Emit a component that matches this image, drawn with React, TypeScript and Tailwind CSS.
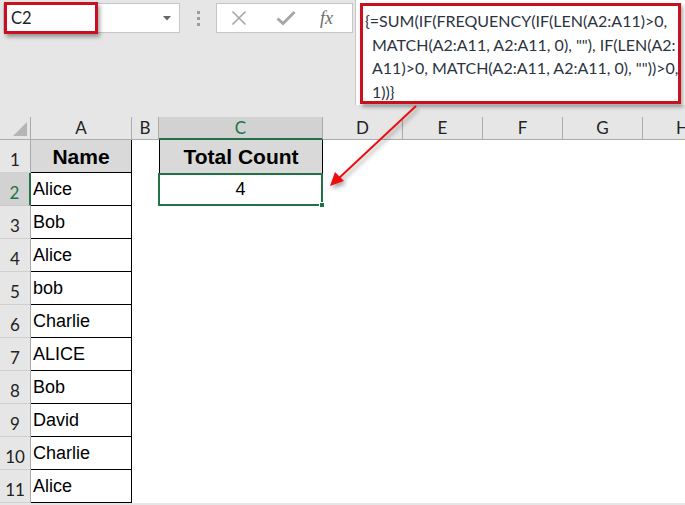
import React from "react";

const names = ["Alice", "Bob", "Alice", "bob", "Charlie", "ALICE", "Bob", "David", "Charlie", "Alice"];
const cols = ["A", "B", "C", "D", "E", "F", "G", "H"];

export default function App() {
  const formulaLines = [
    "{=SUM(IF(FREQUENCY(IF(LEN(A2:A11)>0,",
    "MATCH(A2:A11, A2:A11, 0), \"\"), IF(LEN(A2:",
    "A11)>0, MATCH(A2:A11, A2:A11, 0), \"\"))>0,",
    "1))}",
  ];
  return (
    <div className="relative w-[685px] h-[505px] overflow-hidden bg-[#e6e6e6] font-['Liberation_Sans',Arial,sans-serif]">
      {/* Toolbar */}
      <div className="flex h-[117px] items-start">
        {/* Name box */}
        <div className="relative ml-[3px] mt-[3px] flex h-[30px] w-[177px] items-center justify-between border border-[#c6c6c6] bg-white pl-[7px] pr-[8px]">
          <span className="font-['Lato',sans-serif] text-[16.5px] text-[#222]">C2</span>
          <svg width="8" height="5" viewBox="0 0 8 5"><path d="M0 0 H8 L4 4.5 Z" fill="#666" /></svg>
          <div className="absolute left-0 top-[-2px] h-[32px] w-[94px] border-[3px] border-[#c8101e] shadow-[2px_3px_4px_rgba(0,0,0,0.35)]" />
        </div>
        {/* dots */}
        <div className="ml-[17px] mt-[11px] flex flex-col gap-[3px]">
          <div className="h-[3px] w-[3px] bg-[#9c9c9c]" />
          <div className="h-[3px] w-[3px] bg-[#9c9c9c]" />
          <div className="h-[3px] w-[3px] bg-[#9c9c9c]" />
        </div>
        {/* fx box */}
        <div className="ml-[16px] mt-[3px] flex h-[30px] w-[137px] items-center border border-[#c6c6c6] bg-white">
          <svg className="ml-[14px]" width="16" height="16" viewBox="0 0 16 16">
            <path d="M1.5 1.5 L14.5 14.5 M14.5 1.5 L1.5 14.5" stroke="#a6a6a6" strokeWidth="1.6" fill="none" />
          </svg>
          <svg className="ml-[29px]" width="20" height="16" viewBox="0 0 20 16">
            <path d="M1.5 8.5 L7 13.5 L18.5 2" stroke="#a6a6a6" strokeWidth="3" fill="none" />
          </svg>
          <span className="ml-[24px] font-['Liberation_Serif',serif] text-[18px] italic leading-none text-[#6a6a6a]">fx</span>
        </div>
        {/* formula bar */}
        <div className="ml-[2px] flex h-[105px] flex-1 border-l border-[#c6c6c6] bg-white pl-[4px] pt-[3px] pr-[3px]">
          <div className="h-[101px] w-[321px] border-[3px] border-[#c8101e] bg-white pl-[2px] pt-[3px] shadow-[2px_3px_4px_rgba(0,0,0,0.35)]">
            {formulaLines.map((l, i) => (
              <div
                key={i}
                className={`whitespace-pre font-['Lato',sans-serif] text-[16px] leading-[23.5px] text-[#2b3440] ${i === 0 ? "" : "pl-[7px]"}`}
              >
                {l}
              </div>
            ))}
          </div>
        </div>
      </div>

      {/* Grid */}
      <div className="grid w-[723px] grid-cols-[31px_101px_27px_164px_80px_80px_80px_80px_80px] grid-rows-[23px_repeat(11,33px)] bg-white">
        {/* header row */}
        <div className="relative border-b border-r border-[#ababab] bg-[#e6e6e6]">
          <svg className="absolute bottom-[3px] right-[3px]" width="14" height="14" viewBox="0 0 14 14">
            <path d="M14 0 L14 14 L0 14 Z" fill="#b5b5b5" />
          </svg>
        </div>
        {cols.map((c) =>
          c === "C" ? (
            <div key={c} className="flex items-center justify-center border-b-2 border-r border-b-[#217346] border-r-[#ababab] bg-[#d2d2d2] font-['Lato',sans-serif] text-[17px] text-[#217346]">
              {c}
            </div>
          ) : (
            <div key={c} className="flex items-center justify-center border-b border-r border-[#ababab] bg-[#e6e6e6] font-['Lato',sans-serif] text-[17px] text-[#222]">
              {c}
            </div>
          )
        )}
        {Array.from({ length: 11 }).map((_, r) => {
          const row = r + 1;
          const sel = row === 2;
          return (
            <React.Fragment key={row}>
              <div
                className={`flex items-center justify-center pt-[7px] font-['Lato',sans-serif] text-[17px] ${
                  sel
                    ? "border-b border-r-2 border-b-[#c8c8c8] border-r-[#217346] bg-[#d2d2d2] text-[#217346]"
                    : "border-b border-r border-b-[#d0d0d0] border-r-[#ababab] bg-[#e6e6e6] text-[#222]"
                }`}
              >
                {row}
              </div>
              {/* A */}
              {row === 1 ? (
                <div className="flex items-center justify-center border-b border-r border-black bg-[#d9d9d9] pt-[1px] text-[21px] font-bold text-black">
                  Name
                </div>
              ) : (
                <div className="flex items-center border-b border-r border-black pl-[2px] pt-[1px] text-[18px] text-black">
                  {names[row - 2]}
                </div>
              )}
              {/* B */}
              <div />
              {/* C */}
              {row === 1 ? (
                <div className="flex items-center justify-center border-l border-r border-black bg-[#d9d9d9] pt-[1px] text-[21px] font-bold text-black">
                  Total Count
                </div>
              ) : row === 2 ? (
                <div className="relative ml-[-1px] flex items-center justify-center border-2 border-[#217346] text-[18px] text-black">
                  4
                  <div className="absolute bottom-[-4px] right-[-4px] h-[6px] w-[6px] border border-white bg-[#217346]" />
                </div>
              ) : (
                <div />
              )}
              <div />
              <div />
              <div />
              <div />
              <div />
            </React.Fragment>
          );
        })}
      </div>

      {/* Arrow annotation */}
      <svg className="pointer-events-none absolute left-0 top-0" width="685" height="505">
        <defs>
          <filter id="sh" x="-20%" y="-20%" width="140%" height="140%">
            <feDropShadow dx="2" dy="3" stdDeviation="2" floodColor="#000" floodOpacity="0.35" />
          </filter>
        </defs>
        <g filter="url(#sh)">
          <line x1="416" y1="106" x2="338" y2="179" stroke="#ee1111" strokeWidth="2" />
          <path d="M330 186 L335 172 L344 181 Z" fill="#ee1111" />
        </g>
      </svg>
    </div>
  );
}
